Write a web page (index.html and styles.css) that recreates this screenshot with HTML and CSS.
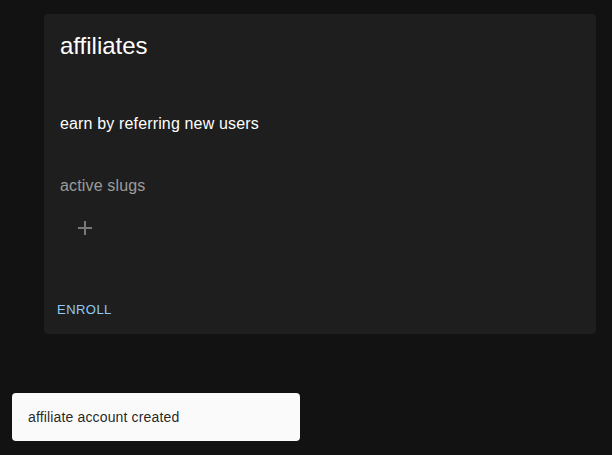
FILE: index.html
```html
<!DOCTYPE html>
<html lang="en">
<head>
<meta charset="utf-8">
<title>affiliates</title>
<link rel="stylesheet" href="styles.css">
</head>
<body>
<main class="page">
  <section class="card">
    <div class="card-content">
      <h2 class="title">affiliates</h2>
      <p class="desc">earn by referring new users</p>
      <p class="label">active slugs</p>
      <button class="icon-btn" type="button" aria-label="add slug">
        <svg viewBox="0 0 24 24" width="24" height="24"><path d="M19 13h-6v6h-2v-6H5v-2h6V5h2v6h6v2z"/></svg>
      </button>
    </div>
    <div class="card-actions">
      <button class="text-btn" type="button">Enroll</button>
    </div>
  </section>
</main>
<div class="snackbar">affiliate account created</div>
</body>
</html>
```

FILE: styles.css
```css
html, body {
  margin: 0;
  padding: 0;
  background: #121212;
  font-family: "Liberation Sans", Arial, sans-serif;
  color: #fff;
  height: 100%;
}

.page {
  padding: 14px 16px 0 44px;
}

.card {
  background: #1e1e1e;
  border-radius: 4px;
  display: flex;
  flex-direction: column;
}

.card-content {
  padding: 16px 16px 35px 16px;
  display: flex;
  flex-direction: column;
  align-items: flex-start;
}

.title {
  margin: 0;
  font-size: 24px;
  font-weight: 400;
  line-height: 32px;
}

.desc {
  margin: 50px 0 0 0;
  font-size: 16px;
  line-height: 24px;
  letter-spacing: 0.15px;
  color: #fff;
}

.label {
  margin: 38px 0 0 0;
  font-size: 16px;
  line-height: 24px;
  letter-spacing: 0.15px;
  color: rgba(255, 255, 255, 0.56);
}

.icon-btn {
  margin-top: 6px;
  width: 48px;
  height: 48px;
  padding: 12px;
  margin-left: 1px;
  border: 0;
  background: transparent;
  border-radius: 50%;
  display: flex;
  align-items: center;
  justify-content: center;
  fill: rgba(255, 255, 255, 0.4);
}

.card-actions {
  padding: 8px;
  display: flex;
}

.text-btn {
  border: 0;
  background: transparent;
  color: #90caf9;
  font-family: "Liberation Sans", Arial, sans-serif;
  font-size: 13px;
  font-weight: 400;
  letter-spacing: 0.46px;
  text-transform: uppercase;
  line-height: 22.75px;
  padding: 4px 5px;
  border-radius: 4px;
}

.snackbar {
  position: fixed;
  left: 12px;
  bottom: 14px;
  width: 288px;
  height: 48px;
  box-sizing: border-box;
  padding: 0 16px;
  display: flex;
  align-items: center;
  background: #fafafa;
  color: rgba(0, 0, 0, 0.87);
  font-size: 14px;
  letter-spacing: 0.15px;
  border-radius: 4px;
}
```
